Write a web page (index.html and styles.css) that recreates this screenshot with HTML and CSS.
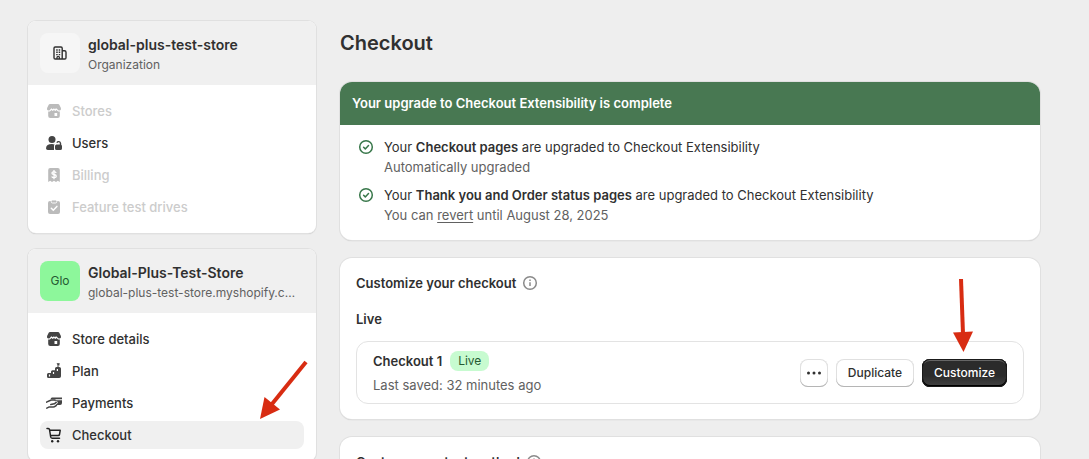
FILE: index.html
```html
<!DOCTYPE html>
<html lang="en">
<head>
<meta charset="utf-8">
<title>Checkout</title>
<link rel="stylesheet" href="styles.css">
</head>
<body>
<svg class="sprites" aria-hidden="true">
  <symbol id="store" viewBox="0 0 16 16">
    <path fill="currentColor" d="M4 1h8q.9 0 1.300.8l1.500 3q.8 2.600-1.500 2.600-1.200 0-1.900-1.200l-1.300-1-1.300 1L8 5.200 6.700 6.200l-1.300-1-1 1Q3.900 7.400 2.700 7.400.4 7.400 1.200 4.800l1.500-3Q3.100 1 4 1z"/>
    <path fill="currentColor" fill-rule="evenodd" d="M2.200 8.500q1.600.3 2.500-.8l.8-.8 1.200 1.100L8 7l1.300 1 1.200-1.100.8.800q.9 1.100 2.500.8V13q0 2-2 2H4.200q-2 0-2-2zM8.500 10v3h2.700v-3z"/>
  </symbol>
</svg>
<div class="page">
  <aside class="sidebar">
    <section class="card">
      <header class="card-head">
        <span class="avatar">
          <svg class="icon" viewBox="0 0 16 16" fill="none" stroke="currentColor" stroke-width="1.400" stroke-linejoin="round"><path d="M10.200 14H3.200q-1.200 0-1.200-1.200V3.200Q2 2 3.200 2H9q1.200 0 1.200 1.200zM10.200 5.700h2.300q1.500 0 1.500 1.500v5.600q0 1.200-1.200 1.200h-2.600"/><path d="M5 14v-1.500a1.200 1.200 0 0 1 2.400 0V14" stroke-width="1.300"/><path d="M4.200 5h1.500M6.700 5h1.500M4.200 7.300h1.500M6.700 7.300h1.500M4.200 9.600h1.500M6.700 9.600h1.500"/></svg>
        </span>
        <div class="head-text"><h2>global-plus-test-store</h2><p>Organization</p></div>
      </header>
      <nav class="nav">
        <a class="nav-item off" aria-disabled="true"><svg class="icon"><use href="#store"/></svg>Stores</a>
        <a class="nav-item" href="#users"><svg class="icon" viewBox="0 0 16 16" fill="currentColor"><circle cx="6" cy="4.500" r="3.500"/><path d="M0 13.200Q.3 9 6 9q1.500 0 2.600.4Q8 10 8 11v4H1.800Q0 15 0 13.200z"/><path d="M10.300 9.500h4q1.700 0 1.700 1.600v2.300q0 1.600-1.700 1.600h-3.600Q9 15 9 13.400v-2.300q0-1.100 1.300-1.600z"/><path d="M14.500 10V8.300a1.900 1.900 0 0 0-3.600-.6" fill="none" stroke="currentColor" stroke-width="1.400"/></svg>Users</a>
        <a class="nav-item off" aria-disabled="true"><svg class="icon" viewBox="0 0 16 16"><path fill="currentColor" d="M4.200 1h7.600q2 0 2 2v12l-2-1.200L10 15l-2-1.200L6 15l-1.800-1.200-2 1.200V3q0-2 2-2z"/><path d="M10.200 5.800Q9.500 4.600 8 4.600T5.900 6q0 1.200 2.100 1.500 2.300.4 2.300 1.700T8 10.700q-1.700 0-2.300-1.300M8 3v9.200" fill="none" stroke="#fff" stroke-width="1.300"/></svg>Billing</a>
        <a class="nav-item off" aria-disabled="true"><svg class="icon" viewBox="0 0 16 16"><path fill="currentColor" d="M4 2h8q2 0 2 2v9q0 2-2 2H4q-2 0-2-2V4q0-2 2-2z"/><rect x="5.200" y="1" width="5.600" height="3" rx="1.400" fill="currentColor" stroke="#fff" stroke-width=".9"/><path d="m5.300 9.200 2 2 3.600-3.800" fill="none" stroke="#fff" stroke-width="1.500" stroke-linecap="round"/></svg>Feature test drives</a>
      </nav>
    </section>
    <section class="card">
      <header class="card-head">
        <span class="avatar green">Glo</span>
        <div class="head-text"><h2>Global-Plus-Test-Store</h2><p>global-plus-test-store.myshopify.com</p></div>
      </header>
      <nav class="nav">
        <a class="nav-item" href="#details"><svg class="icon"><use href="#store"/></svg>Store details</a>
        <a class="nav-item" href="#plan"><svg class="icon" viewBox="0 0 16 16"><path fill="currentColor" d="M1 11.500Q1 10 2.400 10H5V8.800q0-1.500 1.500-1.500H9V5.500Q9 4 10.500 4h2.700Q15 4 15 5.500v7.700q0 1.800-1.800 1.800H2.500Q1 15 1 13.500z"/><path d="M3.500 11.500v2M7.500 9v2M11.400 6v2" stroke="#fff" stroke-width="1.200"/><path d="M12 4V.7" stroke="currentColor" stroke-width="1"/><path d="M10.500.3H14l-.8 1 .8 1h-2z" fill="currentColor"/></svg>Plan</a>
        <a class="nav-item" href="#payments"><svg class="icon" viewBox="0 0 16 16"><path fill="currentColor" d="M5.800 2.500H16v1.700H4.500q.3-1.200 1.300-1.700zM8 5.200h8v2.800q0 2-2 2H9.600l1.700-1.500q1-1.100 0-2-.7-.7-2-.3z"/><path d="M.5 7.200 4 5.500q.7-.4 1.600-.4H9M.8 13.200l2.500-1.300h3.900q1.200 0 2.200-.8l1-.8M4.800 9.500l3.500-.7 1.900-1.400" fill="none" stroke="currentColor" stroke-width="1.500" stroke-linecap="round" stroke-linejoin="round"/></svg>Payments</a>
        <a class="nav-item current" href="#checkout" aria-current="page"><svg class="icon" viewBox="0 0 16 16"><path d="M1 1.500h1.300q1 0 1.200 1l1.200 7.500q.2 1.200 1.400 1.200h7.400M3.700 3.300h10.500l-.7 4.200q-.2 1-1.200 1H4.500" fill="none" stroke="currentColor" stroke-width="1.500" stroke-linecap="round" stroke-linejoin="round"/><circle cx="6.200" cy="14.200" r="1.200" fill="currentColor"/><circle cx="12" cy="14.200" r="1.200" fill="currentColor"/></svg>Checkout</a>
      </nav>
      <svg class="arrow arrow-nav" viewBox="0 0 50 60" aria-hidden="true"><path d="m46 1-34 42" stroke="#d82c12" stroke-width="4"/><path d="M0 58 4.500 36 20 48.500z" fill="#d82c12"/></svg>
    </section>
  </aside>
  <main class="main">
    <h1>Checkout</h1>
    <section class="card banner">
      <h2 class="banner-head">Your upgrade to Checkout Extensibility is complete</h2>
      <ul class="steps">
        <li><svg class="icon tick" viewBox="0 0 16 16"><circle cx="8" cy="8" r="6.300"/><path d="m5.600 8.200 1.700 1.700 3.200-3.400"/></svg><div><p>Your <b>Checkout pages</b> are upgraded to Checkout Extensibility</p><p class="muted">Automatically upgraded</p></div></li>
        <li><svg class="icon tick" viewBox="0 0 16 16"><circle cx="8" cy="8" r="6.300"/><path d="m5.600 8.200 1.700 1.700 3.200-3.400"/></svg><div><p>Your <b>Thank you and Order status pages</b> are upgraded to Checkout Extensibility</p><p class="muted">You can <a href="#revert">revert</a> until August 28, 2025</p></div></li>
      </ul>
    </section>
    <section class="card panel">
      <h2 class="panel-title">Customize your checkout <svg class="icon info" viewBox="0 0 16 16"><circle cx="8" cy="8" r="6.300"/><path d="M8 7.300V11M8 4.500V6"/></svg></h2>
      <h3>Live</h3>
      <div class="row">
        <div class="row-text"><div class="row-name"><h4>Checkout 1</h4><span class="badge">Live</span></div><p class="muted">Last saved: 32 minutes ago</p></div>
        <div class="actions">
          <button class="btn more" aria-label="More actions"><svg class="icon" viewBox="0 0 16 16" fill="currentColor"><circle cx="2.500" cy="8" r="1.500"/><circle cx="8" cy="8" r="1.500"/><circle cx="13.500" cy="8" r="1.500"/></svg></button>
          <button class="btn">Duplicate</button>
          <div class="primary-wrap"><button class="btn primary">Customize</button>
            <svg class="arrow arrow-btn" viewBox="0 0 20 74" aria-hidden="true"><path d="m8 1 2 55" stroke="#d82c12" stroke-width="4"/><path d="M0 54.500 20 53.500 10.500 74z" fill="#d82c12"/></svg></div>
        </div>
      </div>
    </section>
    <section class="card panel">
      <h2 class="panel-title">Customer contact method <svg class="icon info" viewBox="0 0 16 16"><circle cx="8" cy="8" r="6.300"/><path d="M8 7.300V11M8 4.500V6"/></svg></h2>
    </section>
  </main>
</div>
</body>
</html>
```
FILE: styles.css
```css
* { box-sizing: border-box; margin: 0; padding: 0; }
html, body { height: 100%; }
body { background: #eee; color: #303030; font: 13px/20px Inter, sans-serif; overflow: hidden; }
.sprites { position: absolute; width: 0; height: 0; }
.page { display: grid; grid-template-columns: 288px minmax(0, 1fr); gap: 24px; padding: 21px 49px 0 28px; }
.icon { width: 16px; height: 16px; flex: none; }
h2, h3, h4 { font-size: 13px; font-weight: 600; }
.card { position: relative; background: #fff; border-radius: 12px; box-shadow: 0 0 0 1px #e0e0e0, 0 1px 1px 0 #bbb; }
.sidebar, .main { display: flex; flex-direction: column; gap: 16px; min-width: 0; }
.sidebar .card { border-radius: 8px; }
.card-head { display: flex; align-items: center; gap: 8px; height: 64px; padding: 12px 16px 12px 12px; background: #f0f0f0; border-radius: 8px 8px 0 0; }
.avatar { display: grid; place-items: center; flex: none; width: 40px; height: 40px; border-radius: 8px; background: #f6f6f6; font-size: 12px; }
.green { background: #8df79b; color: #255a32; }
.head-text { min-width: 0; padding-top: 4px; }
.head-text h2 { font-size: 14px; }
.head-text p { overflow: hidden; font-size: 12px; color: #616161; white-space: nowrap; text-overflow: ellipsis; }
.nav { display: flex; flex-direction: column; gap: 4px; padding: 12px; }
.nav-item { display: flex; align-items: center; gap: 10px; height: 28px; padding: 0 6px; border-radius: 8px; color: #303030; font-weight: 500; text-decoration: none; }
.nav-item .icon { color: #444; }
.nav-item.off { color: #ccc; }
.nav-item.off .icon { color: #bbb; }
.nav-item.current { background: #f0f0f0; }
.nav-item.current .icon { color: #222; }
.arrow { position: absolute; z-index: 2; overflow: visible; pointer-events: none; }
.arrow-nav { left: 232px; top: 112px; width: 50px; height: 60px; }
.arrow-btn { left: 31px; top: -81px; width: 20px; height: 74px; }
.main { gap: 18px; }
h1 { padding: 9px 0 8px; font-size: 20px; line-height: 26px; font-weight: 600; }
.banner-head { padding: 11px 12px 12px; color: #fff; background: #487852; border-radius: 12px 12px 0 0; }
.steps { display: flex; flex-direction: column; gap: 8px; padding: 12px 16px 15px 18px; list-style: none; }
.steps li { display: flex; gap: 10px; }
.steps .icon { margin-top: 2px; }
.steps b { font-weight: 600; }
.muted { color: #616161; }
.muted a { color: inherit; text-underline-offset: 2px; }
.tick, .info { fill: none; stroke: #38774a; stroke-width: 1.5; stroke-linecap: round; stroke-linejoin: round; }
.info { stroke: #8a8a8a; stroke-linecap: butt; }
.panel { padding: 15px 16px; }
.panel-title { display: flex; align-items: center; gap: 6px; }
h3 { margin: 16px 0 12px; }
.row { display: flex; align-items: center; justify-content: space-between; padding: 9px 16px 8px; border: 1px solid #e3e3e3; border-radius: 12px; }
.row-text { display: grid; gap: 4px; }
.row-name { display: flex; align-items: center; gap: 8px; }
.badge { padding: 0 8px; border-radius: 8px; background: #c7fbd0; color: #255a32; font-size: 12px; }
.actions { display: flex; align-items: center; gap: 8px; }
.btn { display: block; height: 28px; padding: 0 12px; border: 0; border-radius: 8px; background: #fff; box-shadow: inset 0 -1px 0 #b5b5b5, inset 0 0 0 1px #e0e0e0; color: #303030; font: 500 12px/16px Inter, sans-serif; }
.more { width: 28px; padding: 6px; }
.primary-wrap { position: relative; }
.primary { background: linear-gradient(#2b2b2b 60%, #444); box-shadow: inset 0 0 0 1px #1a1a1a, inset 0 -1px 0 1px #000, inset 0 2px 0 #666; color: #fff; }
```
